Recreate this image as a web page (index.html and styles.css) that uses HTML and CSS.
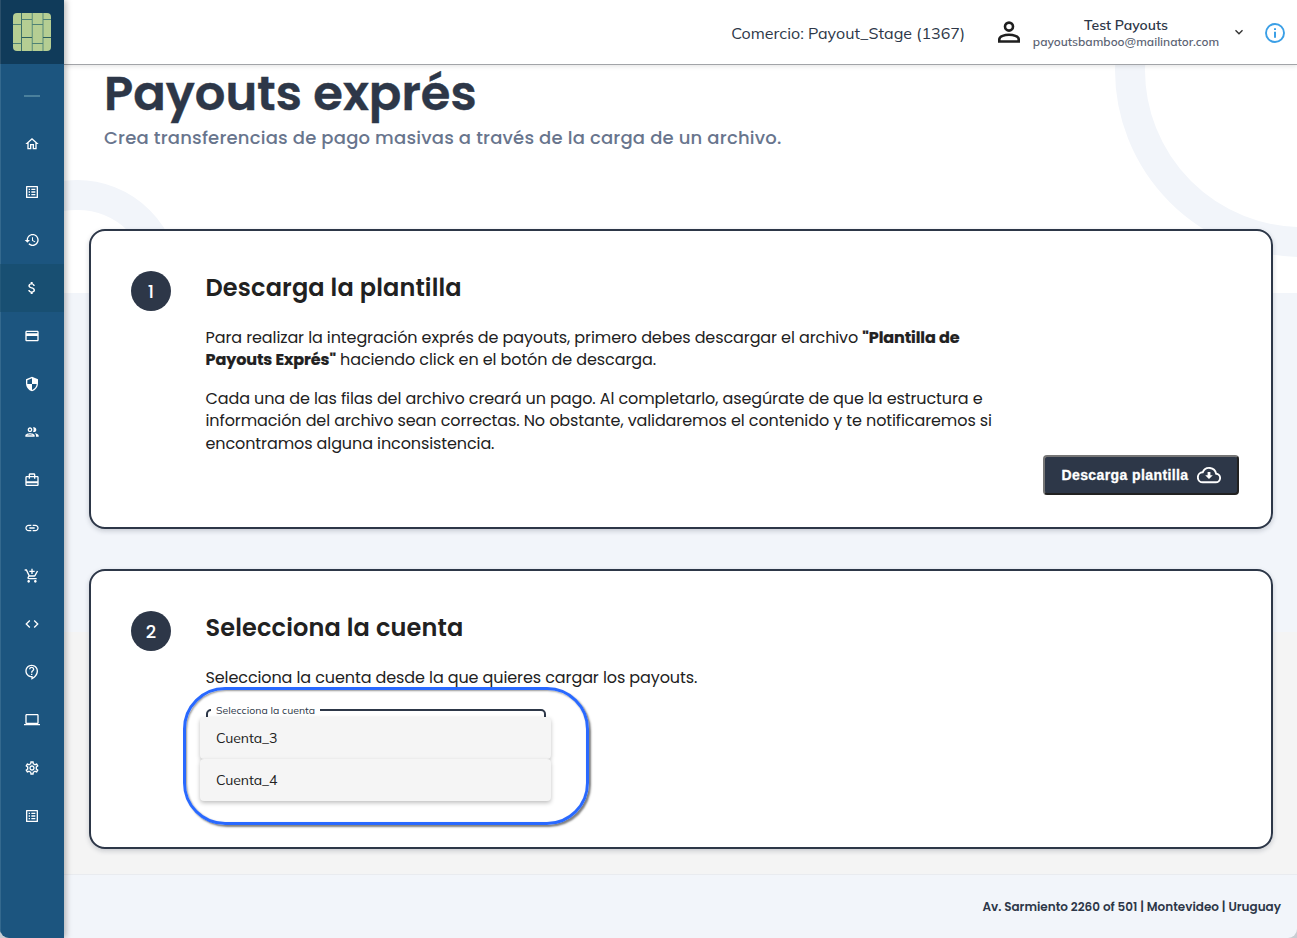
FILE: index.html
```html
<!DOCTYPE html>
<html lang="es">
<head>
<meta charset="utf-8">
<title>Payouts exprés</title>
<link rel="stylesheet" href="styles.css">
</head>
<body>
<div class="app">
  <aside class="sidebar">
    <div class="brand">
      <svg class="logo" viewBox="0 0 38 38">
        <defs><clipPath id="tile"><rect width="38" height="38" rx="4"/></clipPath></defs>
        <g clip-path="url(#tile)">
          <rect width="38" height="38" fill="#b5ce93"/>
          <g stroke="#4f8275" stroke-width="1" fill="none">
            <path d="M8.5 0V38" stroke="#3d7069"/>
            <path d="M30 0V38M19.300 0V38" stroke="#6d9a80" stroke-width="1.300"/>
            <path d="M0 11.500H8.500M0 30.500H8.500M8.500 6.500H19M19 11.500H30M19 30.500H30M30 6.500H38"/>
            <path d="M8.500 24.500H19M30 24.500H38" stroke="#2c5f5e"/>
          </g>
        </g>
      </svg>
    </div>
    <nav class="menu">
      <div class="item"><span class="dash"></span></div>
      <a class="item"><svg viewBox="0 0 24 24"><path d="M12 5.69l5 4.5V18h-2v-6H9v6H7v-7.81l5-4.5M12 3L2 12h3v8h6v-6h2v6h6v-8h3L12 3z"/></svg></a>
      <a class="item"><svg viewBox="0 0 24 24"><path d="M19 5v14H5V5h14m1.1-2H3.9c-.5 0-.9.4-.9.9v16.2c0 .4.4.9.9.9h16.2c.4 0 .9-.5.9-.9V3.9c0-.5-.5-.9-.9-.9zM11 7h6v2h-6V7zm0 4h6v2h-6v-2zm0 4h6v2h-6zM7 7h2v2H7zm0 4h2v2H7zm0 4h2v2H7z"/></svg></a>
      <a class="item"><svg viewBox="0 0 24 24"><path d="M13 3c-4.97 0-9 4.03-9 9H1l3.89 3.89.07.14L9 12H6c0-3.87 3.13-7 7-7s7 3.13 7 7-3.13 7-7 7c-1.93 0-3.68-.79-4.94-2.06l-1.42 1.42C8.27 19.99 10.51 21 13 21c4.97 0 9-4.03 9-9s-4.03-9-9-9zm-1 5v5l4.28 2.54.72-1.21-3.5-2.08V8H12z"/></svg></a>
      <a class="item active"><svg viewBox="0 0 24 24"><path d="M11.8 10.9c-2.27-.59-3-1.2-3-2.15 0-1.09 1.01-1.85 2.7-1.85 1.78 0 2.44.85 2.5 2.1h2.21c-.07-1.72-1.12-3.3-3.21-3.81V3h-3v2.16c-1.94.42-3.5 1.68-3.5 3.61 0 2.31 1.91 3.46 4.7 4.13 2.5.6 3 1.48 3 2.41 0 .69-.49 1.79-2.7 1.79-2.06 0-2.87-.92-2.98-2.1h-2.2c.12 2.19 1.76 3.42 3.68 3.83V21h3v-2.15c1.95-.37 3.5-1.5 3.5-3.55 0-2.84-2.43-3.81-4.7-4.4z"/></svg></a>
      <a class="item"><svg viewBox="0 0 24 24"><path d="M20 4H4c-1.11 0-1.99.89-1.99 2L2 18c0 1.11.89 2 2 2h16c1.11 0 2-.89 2-2V6c0-1.11-.89-2-2-2zm0 14H4v-6h16v6zm0-10H4V6h16v2z"/></svg></a>
      <a class="item"><svg viewBox="0 0 24 24"><path d="M12 1L3 5v6c0 5.55 3.84 10.74 9 12 5.16-1.26 9-6.45 9-12V5l-9-4zm0 10.99h7c-.53 4.12-3.28 7.79-7 8.94V12H5V6.3l7-3.11v8.8z"/></svg></a>
      <a class="item"><svg viewBox="0 0 24 24"><path d="M9 13.75c-2.34 0-7 1.17-7 3.5V19h14v-1.75c0-2.33-4.66-3.5-7-3.5zM4.34 17c.84-.58 2.87-1.25 4.66-1.25s3.82.67 4.66 1.25H4.34zM9 12c1.93 0 3.5-1.57 3.5-3.5S10.93 5 9 5 5.5 6.57 5.5 8.5 7.07 12 9 12zm0-5c.83 0 1.5.67 1.5 1.5S9.83 10 9 10s-1.5-.67-1.5-1.5S8.17 7 9 7zm7.04 6.81c1.16.84 1.96 1.96 1.96 3.44V19h4v-1.75c0-2.02-3.5-3.17-5.96-3.44zM15 12c1.93 0 3.5-1.57 3.5-3.5S16.93 5 15 5c-.54 0-1.04.13-1.5.35.63.89 1 1.98 1 3.15s-.37 2.26-1 3.15c.46.22.96.35 1.5.35z"/></svg></a>
      <a class="item"><svg viewBox="0 0 24 24"><path d="M20 6h-3V4c0-1.11-.89-2-2-2H9c-1.11 0-2 .89-2 2v2H4c-1.11 0-2 .89-2 2v11c0 1.11.89 2 2 2h16c1.11 0 2-.89 2-2V8c0-1.11-.89-2-2-2zM9 4h6v2H9V4zm11 15H4v-2h16v2zm0-5H4V8h3v2h2V8h6v2h2V8h3v6z"/></svg></a>
      <a class="item"><svg viewBox="0 0 24 24"><path d="M3.9 12c0-1.71 1.39-3.1 3.1-3.1h4V7H7c-2.76 0-5 2.24-5 5s2.24 5 5 5h4v-1.9H7c-1.71 0-3.1-1.39-3.1-3.1zM8 13h8v-2H8v2zm9-6h-4v1.9h4c1.71 0 3.1 1.39 3.1 3.1s-1.39 3.1-3.1 3.1h-4V17h4c2.76 0 5-2.24 5-5s-2.24-5-5-5z"/></svg></a>
      <a class="item"><svg viewBox="0 0 24 24"><path d="M11 9h2V6h3V4h-3V1h-2v3H8v2h3v3zm-4 9c-1.1 0-1.99.9-1.99 2S5.9 22 7 22s2-.9 2-2-.9-2-2-2zm10 0c-1.1 0-1.99.9-1.99 2s.89 2 1.99 2 2-.9 2-2-.9-2-2-2zm-8.9-5h7.45c.75 0 1.41-.41 1.75-1.03l3.86-7.01L19.42 4l-3.87 7H8.53L4.27 2H1v2h2l3.6 7.59-1.35 2.44C4.52 15.37 5.48 17 7 17h12v-2H7l1.1-2z"/></svg></a>
      <a class="item"><svg viewBox="0 0 24 24"><path d="M9.4 16.6L4.8 12l4.6-4.6L8 6l-6 6 6 6 1.4-1.4zm5.2 0l4.6-4.6-4.6-4.6L16 6l6 6-6 6-1.4-1.4z"/></svg></a>
      <a class="item"><svg viewBox="0 0 24 24"><path d="M11 23.59v-3.6c-5.01-.26-9-4.42-9-9.49C2 5.26 6.26 1 11.5 1S21 5.26 21 10.5c0 4.95-3.44 9.93-8.57 12.4l-1.43.69zM11.5 3C7.36 3 4 6.36 4 10.5S7.36 18 11.5 18H13v2.3c3.64-2.3 6-6.08 6-9.8C19 6.36 15.64 3 11.5 3zm-1 11.5h2v2h-2zm2-1.5h-2c0-3.25 3-3 3-5 0-1.1-.9-2-2-2s-2 .9-2 2h-2c0-2.21 1.79-4 4-4s4 1.79 4 4c0 2.5-3 2.75-3 5z"/></svg></a>
      <a class="item"><svg viewBox="0 0 24 24"><path d="M20 18c1.1 0 1.99-.9 1.99-2L22 5c0-1.1-.9-2-2-2H4c-1.1 0-2 .9-2 2v11c0 1.1.9 2 2 2H0v2h24v-2h-4zM4 5h16v11H4V5z"/></svg></a>
      <a class="item"><svg viewBox="0 0 24 24"><path d="M19.43 12.98c.04-.32.07-.64.07-.98 0-.34-.03-.66-.07-.98l2.11-1.65c.19-.15.24-.42.12-.64l-2-3.46c-.09-.16-.26-.25-.44-.25-.06 0-.12.01-.17.03l-2.49 1c-.52-.4-1.08-.73-1.69-.98l-.38-2.65C14.46 2.18 14.25 2 14 2h-4c-.25 0-.46.18-.49.42l-.38 2.65c-.61.25-1.17.59-1.69.98l-2.49-1c-.06-.02-.12-.03-.18-.03-.17 0-.34.09-.43.25l-2 3.46c-.13.22-.07.49.12.64l2.11 1.65c-.04.32-.07.65-.07.98 0 .33.03.66.07.98l-2.11 1.65c-.19.15-.24.42-.12.64l2 3.46c.09.16.26.25.44.25.06 0 .12-.01.17-.03l2.49-1c.52.4 1.08.73 1.69.98l.38 2.65c.03.24.24.42.49.42h4c.25 0 .46-.18.49-.42l.38-2.65c.61-.25 1.17-.59 1.69-.98l2.49 1c.06.02.12.03.18.03.17 0 .34-.09.43-.25l2-3.46c.12-.22.07-.49-.12-.64l-2.11-1.65zm-1.98-1.71c.04.31.05.52.05.73 0 .21-.02.43-.05.73l-.14 1.13.89.7 1.08.84-.7 1.21-1.27-.51-1.04-.42-.9.68c-.43.32-.84.56-1.25.73l-1.06.43-.16 1.13-.2 1.35h-1.4l-.19-1.35-.16-1.13-1.06-.43c-.43-.18-.83-.41-1.23-.71l-.91-.7-1.06.43-1.27.51-.7-1.21 1.08-.84.89-.7-.14-1.13c-.03-.31-.05-.54-.05-.74s.02-.43.05-.73l.14-1.13-.89-.7-1.08-.84.7-1.21 1.27.51 1.04.42.9-.68c.43-.32.84-.56 1.25-.73l1.06-.43.16-1.13.2-1.35h1.39l.19 1.35.16 1.13 1.06.43c.43.18.83.41 1.23.71l.91.7 1.06-.43 1.27-.51.7 1.21-1.07.85-.89.7.14 1.13zM12 8c-2.21 0-4 1.79-4 4s1.79 4 4 4 4-1.79 4-4-1.79-4-4-4zm0 6c-1.1 0-2-.9-2-2s.9-2 2-2 2 .9 2 2-.9 2-2 2z"/></svg></a>
      <a class="item"><svg viewBox="0 0 24 24"><path d="M19 5v14H5V5h14m1.1-2H3.9c-.5 0-.9.4-.9.9v16.2c0 .4.4.9.9.9h16.2c.4 0 .9-.5.9-.9V3.9c0-.5-.5-.9-.9-.9zM11 7h6v2h-6V7zm0 4h6v2h-6v-2zm0 4h6v2h-6zM7 7h2v2H7zm0 4h2v2H7zm0 4h2v2H7z"/></svg></a>
    </nav>
  </aside>

  <div class="page">
    <header class="topbar">
      <span class="commerce">Comercio: Payout_Stage (1367)</span>
      <svg class="person" viewBox="0 0 24 24" fill="none" stroke="#1f1f1f" stroke-width="2.6"><circle cx="12" cy="6.6" r="4"/><path d="M2.300 21.500v-2.300c0-3 5.600-4.400 9.700-4.400s9.700 1.400 9.700 4.400v2.300z"/></svg>
      <div class="user">
        <span class="user-name">Test Payouts</span>
        <span class="user-mail">payoutsbamboo@mailinator.com</span>
      </div>
      <svg class="chevron" viewBox="0 0 10 10" fill="none" stroke="#333" stroke-width="1.4"><path d="M1.500 3.200L5 6.700l3.500-3.500"/></svg>
      <svg class="info" viewBox="0 0 20 20"><circle cx="10" cy="10" r="9" fill="none" stroke="#3b9fe6" stroke-width="1.900"/><path d="M9 8.800h2v6H9zM9 5.200h2v1.900H9z" fill="#3b9fe6"/></svg>
    </header>

    <main class="content">
      <div class="ring ring-right"></div>
      <div class="ring ring-left"></div>
      <div class="hero">
        <h1 class="title">Payouts exprés</h1>
        <p class="subtitle">Crea transferencias de pago masivas a través de la carga de un archivo.</p>
      </div>
      <section class="card card-download">
        <span class="step">1</span>
        <div class="card-body">
          <h2 class="card-title">Descarga la plantilla</h2>
          <p class="text">Para realizar la integración exprés de payouts, primero debes descargar el archivo <b>"Plantilla de<br>Payouts Exprés"</b> haciendo click en el botón de descarga.</p>
          <p class="text">Cada una de las filas del archivo creará un pago. Al completarlo, asegúrate de que la estructura e<br>información del archivo sean correctas. No obstante, validaremos el contenido y te notificaremos si<br>encontramos alguna inconsistencia.</p>
        </div>
        <button class="download"><span>Descarga plantilla</span>
          <svg viewBox="0 0 24 18" fill="none" stroke="#fff" stroke-width="1.900"><path d="M6 16.300h12.500a4.300 4.300 0 0 0 .6-8.600A7 7 0 0 0 5.700 6.300 5 5 0 0 0 6 16.300z"/><path d="M10.600 6h2.800v3.200h2.400L12 13 8.200 9.200h2.400z" fill="#fff" stroke="none"/></svg>
        </button>
      </section>
      <section class="card card-account">
        <span class="step">2</span>
        <div class="card-body">
          <h2 class="card-title">Selecciona la cuenta</h2>
          <p class="text">Selecciona la cuenta desde la que quieres cargar los payouts.</p>
          <div class="select">
            <fieldset class="field"><legend>Selecciona la cuenta</legend></fieldset>
            <div class="options">
              <div class="option">Cuenta_3</div>
              <div class="option">Cuenta_4</div>
            </div>
            <div class="highlight"></div>
          </div>
        </div>
      </section>
    </main>
    <footer class="footer"><span>Av. Sarmiento 2260 of 501 | Montevideo | Uruguay</span></footer>
  </div>
</div>
</body>
</html>
```
FILE: styles.css
```css
* { box-sizing: border-box; }
body { margin: 0; font-family: Poppins, Inter, sans-serif; color: #212121; background: #c9cdd3; }
h1, h2, p { margin: 0; }
.app { display: flex; height: 938px; overflow: hidden; border-radius: 0 0 9px 9px; }

.sidebar { position: relative; z-index: 3; flex: 0 0 64px; background: #1c557f; box-shadow: inset 1px 0 #34698e, 2px 0 6px rgba(0,0,0,.28); }
.brand { height: 64px; padding: 13px; background: #103b5a; box-shadow: inset 1px 0 #2b506b; }
.logo { display: block; width: 38px; height: 38px; }
.menu { display: flex; flex-direction: column; padding-top: 8px; }
.item { height: 48px; display: flex; align-items: center; justify-content: center; }
.item svg { width: 16px; height: 16px; fill: #fff; }
.active { background: rgba(22,75,104,.55); }
.dash { width: 16px; height: 2px; background: #4a809c; }

.page { flex: 1; min-width: 0; display: flex; flex-direction: column; }
.topbar { position: relative; z-index: 2; flex: 0 0 65px; display: flex; align-items: center; justify-content: flex-end; padding: 0 12px 0 0; background: #fff; border-bottom: 1px solid #a2a4a8; box-shadow: 0 1px 5px rgba(0,0,0,.12); font-family: Mulish, Lato, sans-serif; white-space: nowrap; }
.commerce { font-size: 16px; color: #2d3748; margin: 2px 32px 0 0; letter-spacing: .02px; }
.person { width: 24px; height: 24px; margin-right: 12px; }
.user { width: 186px; display: flex; flex-direction: column; align-items: center; line-height: 17px; margin: 3px 15px 0 0; }
.user-name { font-size: 14px; font-weight: 600; color: #2d3748; }
.user-mail { font-size: 12px; font-weight: 600; color: #5c6474; line-height: 16px; }
.chevron { width: 10px; height: 10px; margin-right: 21px; }
.info { width: 20px; height: 20px; margin-top: 1px; }

.content { position: relative; flex: 1; padding: 0 24px 0 25px; background: linear-gradient(#fff 0 228px, #f2f5fa 228px 567px, #f4f4f4 567px); }
.ring { position: absolute; border: 30px solid #f2f5fa; border-radius: 50%; }
.ring-right { left: 1051px; top: -182px; width: 374px; height: 374px; }
.ring-left { left: -90px; top: 115px; width: 206px; height: 206px; clip-path: inset(0 0 93px 0); }
.hero { position: relative; height: 164px; padding: 0 0 0 15px; white-space: nowrap; }
.title { font-size: 48px; line-height: 57px; font-weight: 600; color: #2d3748; -webkit-text-stroke: .4px #2d3748; }
.subtitle { font-size: 18px; line-height: 28px; margin-top: 2px; font-weight: 500; letter-spacing: .2px; color: #68758d; }

.card { position: relative; display: flex; border: 2px solid #2d3748; border-radius: 16px; background: #fff; padding: 40px; box-shadow: 0 2px 5px rgba(45,55,72,.22); }
.card-download { height: 300px; margin-bottom: 40px; }
.card-account { height: 280px; }
.step { flex: 0 0 40px; height: 40px; border-radius: 50%; background: #2d3748; color: #fff; font-size: 18px; font-weight: 500; line-height: 41px; text-align: center; }
.card-body { margin-left: 34.5px; width: 800px; white-space: nowrap; }
.card-title { font-size: 24px; line-height: 34px; font-weight: 600; letter-spacing: .15px; }
.text { font-size: 16px; line-height: 22.400px; margin-top: 22px; letter-spacing: -.1px; }
.text + .text { margin-top: 16px; }
.text b { letter-spacing: -.1px; -webkit-text-stroke: .2px #212121; }
.download { position: absolute; right: 32px; bottom: 32px; width: 196px; height: 40px; display: flex; align-items: center; justify-content: center; gap: 8px; padding: 0; color: #fff; background: #2d3748; border: 2px solid; border-color: #767676 #212121 #212121 #767676; border-radius: 4px; font: bold 14px "Liberation Sans", Arial, sans-serif; letter-spacing: .4px; -webkit-text-stroke: .3px #fff; white-space: nowrap; }
.download svg { width: 24px; height: 18px; }

.select { position: relative; width: 340px; font-family: Mulish, Lato, sans-serif; }
.field { margin: 14px 0 0; height: 54px; padding: 0 3px; border: 2px solid #2d3748; border-radius: 5px; }
.field legend { padding: 0 5px 0 5.500px; font-size: 10.500px; line-height: 14px; color: #2d3748; }
.options { position: absolute; left: -6px; top: 14px; width: 351px; }
.option { height: 42px; line-height: 42px; padding-left: 16.500px; font-size: 14px; letter-spacing: -.1px; color: #212121; background: #f5f5f5; border-radius: 4px; box-shadow: 0 2px 4px rgba(0,0,0,.25); }
.highlight { position: absolute; left: -23px; top: -16px; width: 406px; height: 138px; border: 3px solid #2969ff; border-radius: 42px; box-shadow: 2px 2px 2px rgba(0,0,0,.5), inset 1px 1px 2px rgba(0,0,0,.4); }

.footer { position: relative; flex: 0 0 64px; display: flex; align-items: center; justify-content: flex-end; padding-right: 16px; background: #f2f5fa; border-top: 1px solid #e9ebef; font-size: 12px; font-weight: 600; color: #2d3748; white-space: nowrap; }
```
